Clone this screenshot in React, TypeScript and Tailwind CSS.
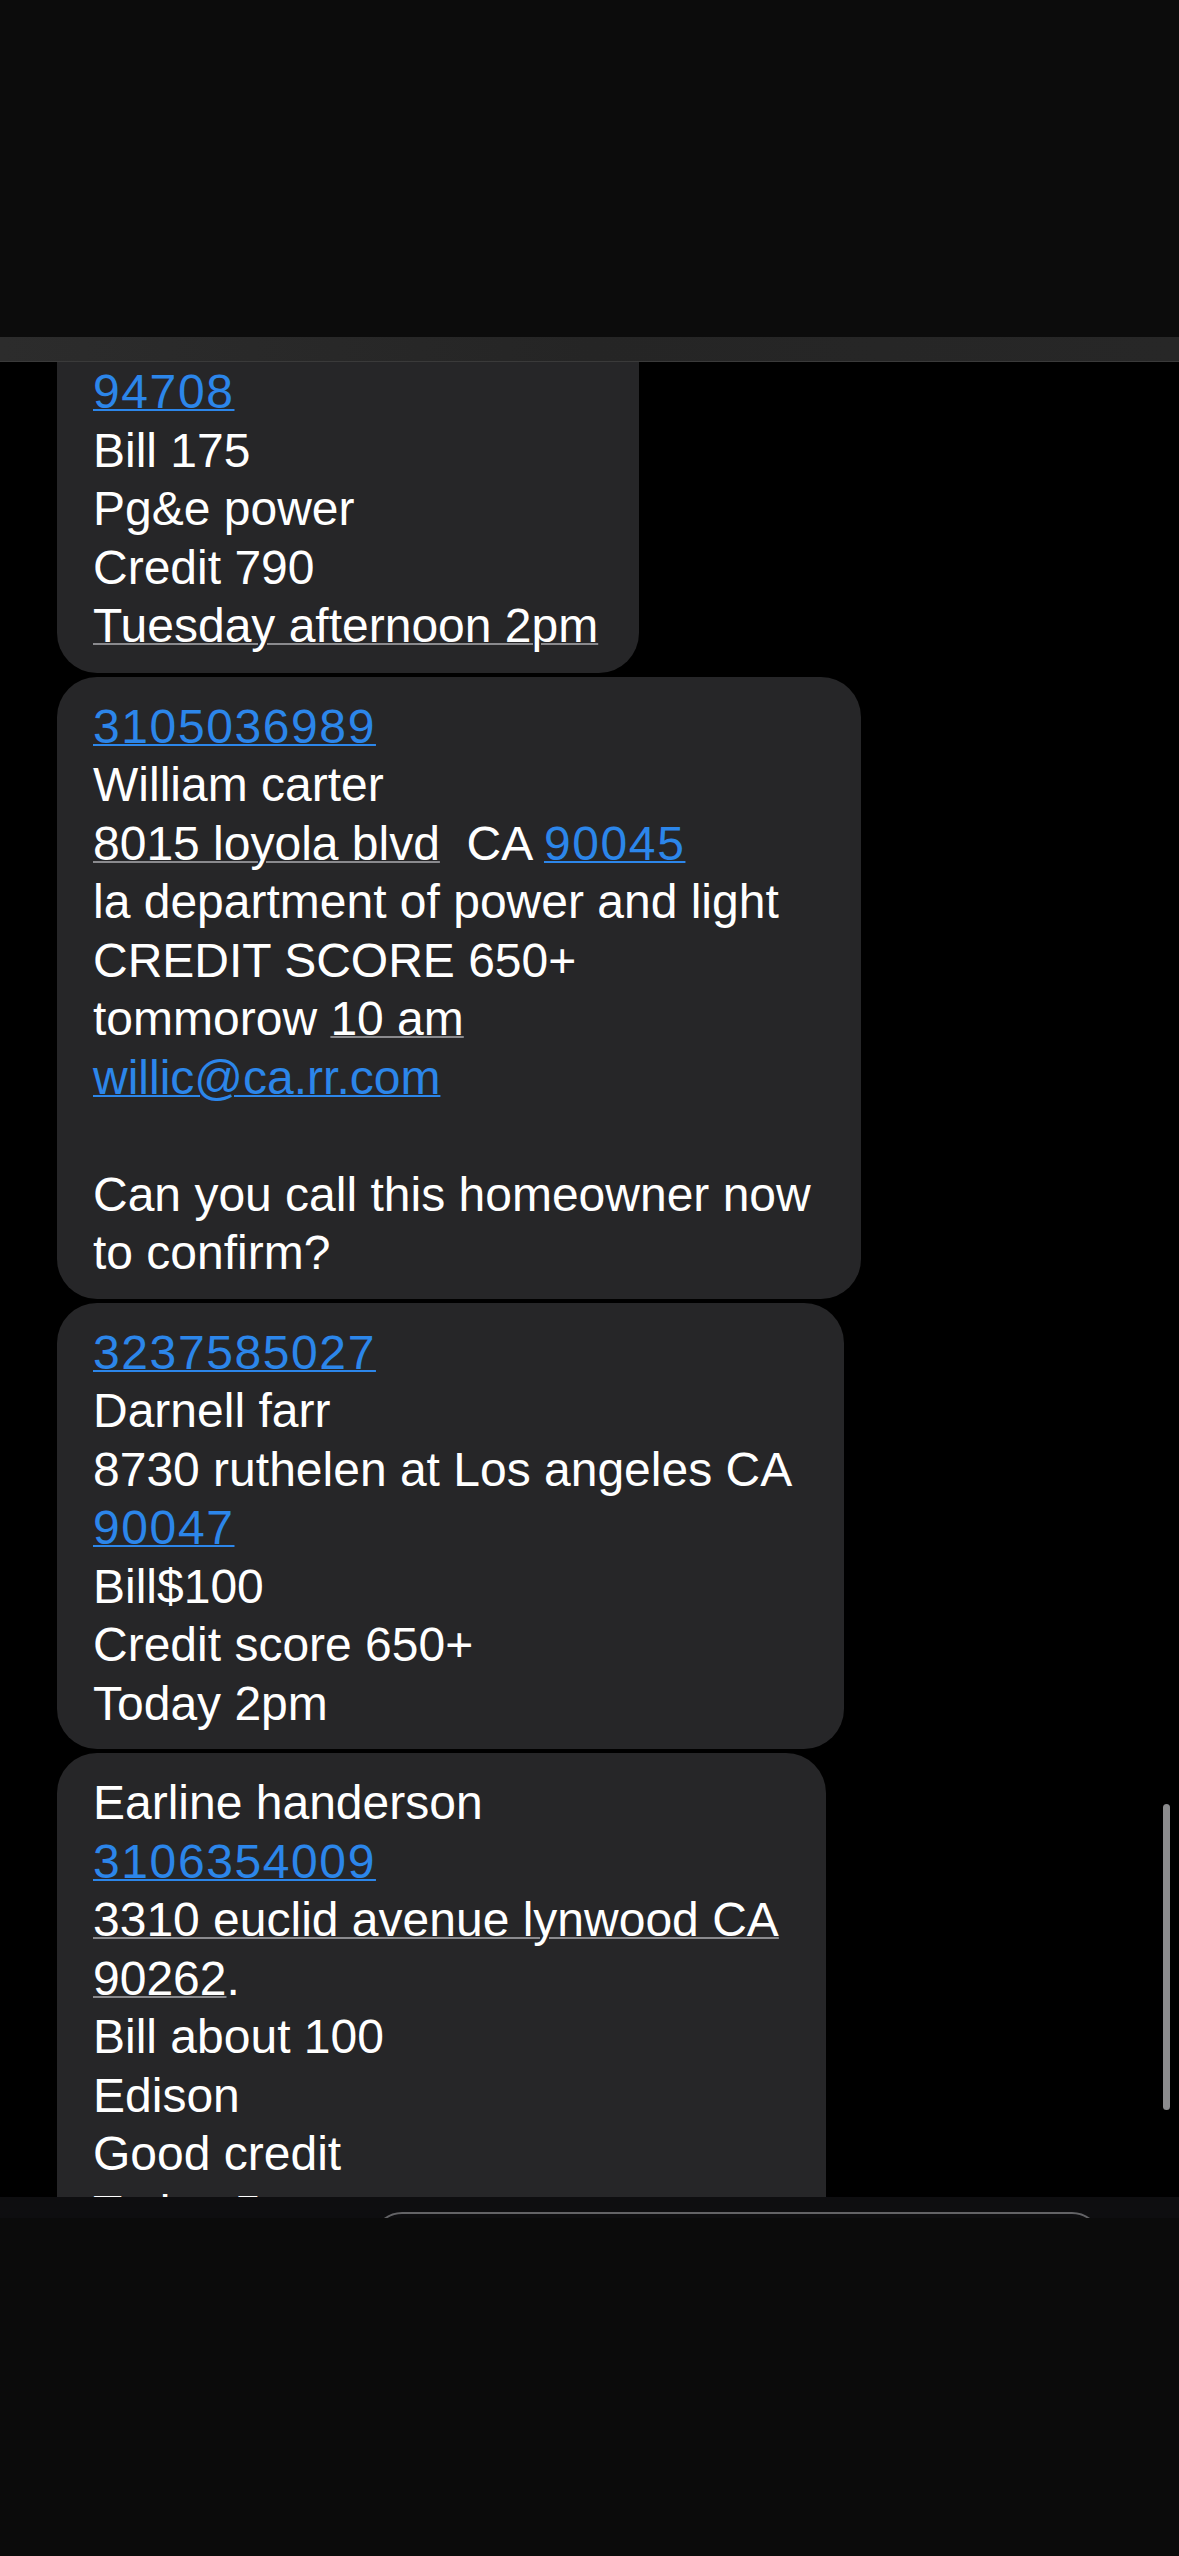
import type { ReactNode } from "react";

const link = "text-[#2c86ea] underline decoration-2 decoration-[#2c86ea]";
const num = "tracking-[1.6px]";
const detected = "underline decoration-2 decoration-[#8a8a8e]";

function Bubble({ width, className = "", children }: { width: string; className?: string; children: ReactNode }) {
  return (
    <div className={`${width} shrink-0 bg-[#262628] px-[36px] text-white ${className}`}>
      {children}
    </div>
  );
}

function Line({ children }: { children?: ReactNode }) {
  return <div className="whitespace-pre">{children ?? "\u00a0"}</div>;
}

export default function App() {
  return (
    <div
      className="flex h-[2556px] w-[1179px] flex-col overflow-hidden bg-black text-[48px] leading-[58.5px]"
      style={{ fontFamily: '"Liberation Sans", Arial, sans-serif' }}
    >
      {/* top overlay */}
      <div className="h-[337px] shrink-0 bg-[#0c0c0c]" />
      <div className="h-[25px] shrink-0 border-b border-[#3a3a3a] bg-gradient-to-r from-[#2c2c2c] via-[#252525] to-[#272727]" />

      {/* conversation */}
      <div className="relative h-[1835px] shrink-0 overflow-hidden">
        <div className="flex flex-col gap-[4px] pl-[57px]">
          <Bubble width="w-[582px]" className="rounded-b-[40px] pt-[1px] pb-[17px]">
            <Line><span className={`${link} ${num}`}>94708</span></Line>
            <Line>Bill 175</Line>
            <Line>Pg&amp;e power</Line>
            <Line>Credit 790</Line>
            <Line><span className={detected}>Tuesday afternoon 2pm</span></Line>
          </Bubble>

          <Bubble width="w-[804px]" className="rounded-[40px] pt-[21px] pb-[16px]">
            <Line><span className={`${link} ${num}`}>3105036989</span></Line>
            <Line>William carter</Line>
            <Line>
              <span className={detected}>8015 loyola blvd</span>
              {"  CA "}
              <span className={`${link} ${num}`}>90045</span>
            </Line>
            <Line>la department of power and light</Line>
            <Line>CREDIT SCORE 650+</Line>
            <Line>
              tommorow <span className={detected}>10 am</span>
            </Line>
            <Line><span className={link}>willic@ca.rr.com</span></Line>
            <Line />
            <Line>Can you call this homeowner now</Line>
            <Line>to confirm?</Line>
          </Bubble>

          <Bubble width="w-[787px]" className="rounded-[40px] pt-[21px] pb-[16px]">
            <Line><span className={`${link} ${num}`}>3237585027</span></Line>
            <Line>Darnell farr</Line>
            <Line>8730 ruthelen at Los angeles CA</Line>
            <Line><span className={`${link} ${num}`}>90047</span></Line>
            <Line>Bill$100</Line>
            <Line>Credit score 650+</Line>
            <Line>Today 2pm</Line>
          </Bubble>

          <Bubble width="w-[769px]" className="rounded-[40px] pt-[21px] pb-[16px]">
            <Line>Earline handerson</Line>
            <Line><span className={`${link} ${num}`}>3106354009</span></Line>
            <Line><span className={detected}>3310 euclid avenue lynwood CA</span></Line>
            <Line>
              <span className={detected}>90262</span>.
            </Line>
            <Line>Bill about 100</Line>
            <Line>Edison</Line>
            <Line>Good credit</Line>
            <Line>Today 5pm</Line>
          </Bubble>
        </div>

        {/* scroll indicator */}
        <div className="absolute right-[9px] top-[1442px] h-[306px] w-[7px] rounded-full bg-[#8b8b8d]" />
      </div>

      {/* input bar edge */}
      <div className="h-[21px] shrink-0 overflow-hidden bg-[#0e0e10] pl-[372px]">
        <div className="mt-[15px] h-[80px] w-[730px] rounded-[30px] border-2 border-[#636366]" />
      </div>
      <div className="flex-1 bg-[#0b0b0b]" />
    </div>
  );
}
